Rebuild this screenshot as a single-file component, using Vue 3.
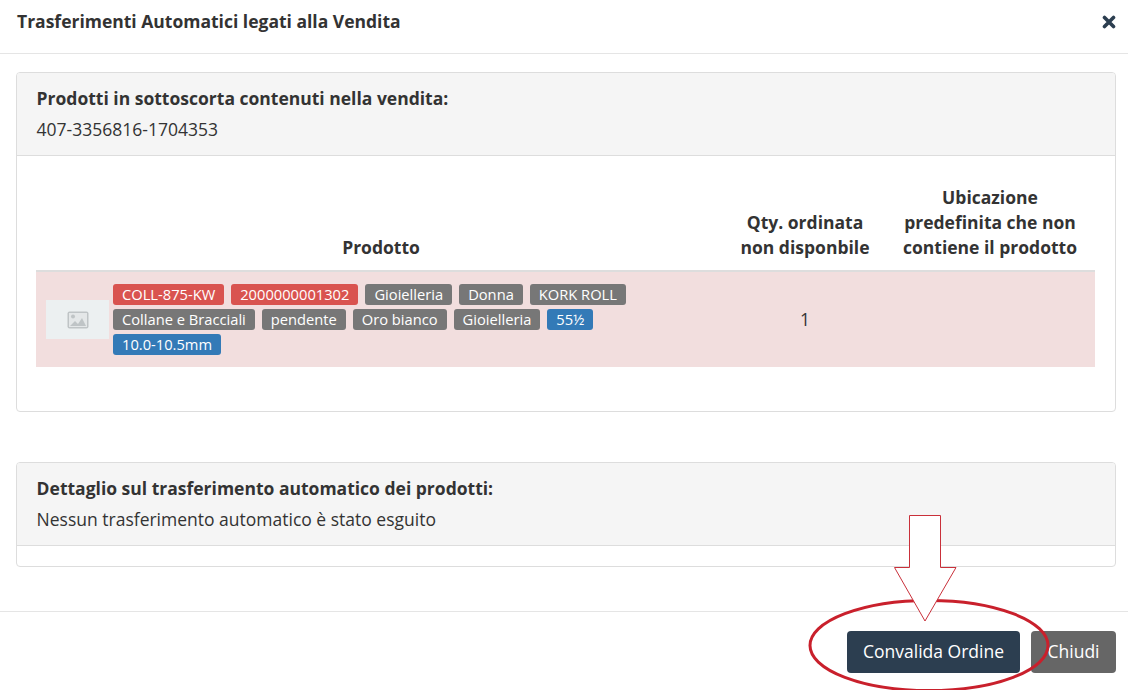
<script setup>
const labels = [
  { t: 'COLL-875-KW', c: 'red' },
  { t: '2000000001302', c: 'red' },
  { t: 'Gioielleria', c: 'grey' },
  { t: 'Donna', c: 'grey' },
  { t: 'KORK ROLL', c: 'grey' },
  { t: 'Collane e Bracciali', c: 'grey' },
  { t: 'pendente', c: 'grey' },
  { t: 'Oro bianco', c: 'grey' },
  { t: 'Gioielleria', c: 'grey' },
  { t: '55½', c: 'blue' },
  { t: '10.0-10.5mm', c: 'blue' },
]
</script>

<template>
  <div class="modal">
    <header class="mhead">
      <h1>Trasferimenti Automatici legati alla Vendita</h1>
      <svg class="close" width="14" height="14" viewBox="0 0 14 14" aria-hidden="true">
        <path d="M2.5 2.5l9 9M11.5 2.5l-9 9" stroke="#2c3e50" stroke-width="3.6" stroke-linecap="round" fill="none" />
      </svg>
    </header>

    <main class="mbody">
      <section class="panel first">
        <div class="phead">
          <strong>Prodotti in sottoscorta contenuti nella vendita:</strong>
          <div class="sub">407-3356816-1704353</div>
        </div>
        <div class="pbody">
          <div class="thead">
            <div class="c1">Prodotto</div>
            <div class="c2">Qty. ordinata non disponbile</div>
            <div class="c3">Ubicazione predefinita che non contiene il prodotto</div>
          </div>
          <div class="row">
            <div class="c1 prod">
              <div class="thumb">
                <svg width="22" height="18" viewBox="0 0 22 18" aria-hidden="true">
                  <rect x="0.5" y="0.5" width="21" height="17" rx="2" fill="#bfc4c6" />
                  <rect x="2" y="2" width="18" height="14" fill="#e4e7e8" />
                  <circle cx="6" cy="5.5" r="2" fill="#bfc4c6" />
                  <path d="M3 15l5-5 3 3 4-6 4 8z" fill="#bfc4c6" />
                </svg>
              </div>
              <div class="labels">
                <span v-for="(l, i) in labels" :key="i" class="label" :class="l.c">{{ l.t }}</span>
              </div>
            </div>
            <div class="c2 qty">1</div>
            <div class="c3"></div>
          </div>
        </div>
      </section>

      <section class="panel second">
        <div class="phead">
          <strong>Dettaglio sul trasferimento automatico dei prodotti:</strong>
          <div class="sub">Nessun trasferimento automatico è stato esguito</div>
        </div>
        <div class="pfoot"></div>
      </section>
    </main>

    <footer class="mfoot">
      <button class="btn dark">Convalida Ordine</button>
      <button class="btn grey">Chiudi</button>
    </footer>

    <svg class="mark" width="1140" height="690" viewBox="0 0 1140 690" aria-hidden="true">
      <ellipse cx="929" cy="645.5" rx="119" ry="45" fill="none" stroke="#c9202c" stroke-width="3" />
      <path d="M909.5 515.5H940.5V567.5H956L925 621L894.5 567.5H909.5Z" fill="#fff" stroke="#c9303a" stroke-width="1" />
    </svg>
  </div>
</template>

<style>
html, body { margin: 0; background: #fff; }
</style>

<style scoped>
.modal {
  position: relative;
  width: 1140px;
  height: 690px;
  overflow: hidden;
  font-family: "Open Sans", sans-serif;
  font-size: 17.5px;
  color: #333;
  background: #fff;
}
.mhead {
  box-sizing: border-box;
  width: 1128px;
  height: 54px;
  border-bottom: 1px solid #e5e5e5;
  display: flex;
  align-items: flex-start;
  justify-content: space-between;
  padding: 9px 12px 0 17px;
}
.mhead h1 {
  margin: 0;
  font-size: 17.5px;
  line-height: 24px;
  font-weight: 700;
  color: #333;
}
.close { margin-top: 6px; }
.mbody {
  box-sizing: border-box;
  width: 1132px;
  height: 557px;
  padding: 18px 16px 0;
}
.panel {
  box-sizing: border-box;
  border: 1px solid #ddd;
  border-radius: 4px;
  overflow: hidden;
}
.first { height: 340px; }
.second { height: 105px; margin-top: 50px; }
.phead {
  background: #f5f5f5;
  border-bottom: 1px solid #ddd;
  padding: 12px 20px 0 19.6px;
  height: 70px;
  line-height: 24px;
}
.phead strong { font-weight: 700; display: block; line-height: 26px; }
.sub { margin-top: 6px; line-height: 24px; }
.pbody { padding: 29px 20px 0 19px; }
.thead {
  display: flex;
  align-items: flex-end;
  height: 87px;
  box-sizing: border-box;
  border-bottom: 2px solid #ddd;
  font-weight: 700;
  text-align: center;
  line-height: 25px;
}
.thead > div { padding-bottom: 10px; }
.thead .c1 { padding-right: 4px; box-sizing: border-box; }
.c1 { width: 694px; flex: none; }
.c2 { width: 150px; flex: none; text-align: center; box-sizing: border-box; padding: 0 5px; }
.c3 { width: 215px; flex: none; text-align: center; box-sizing: border-box; padding: 0 15px 0 20px; }
.row {
  display: flex;
  align-items: center;
  height: 95px;
  background: #f2dede;
}
.prod { display: flex; align-items: center; padding-left: 10px; box-sizing: border-box; }
.thumb {
  width: 63px;
  height: 39px;
  flex: none;
  background: #ecf0f1;
  display: flex;
  align-items: center;
  justify-content: center;
  margin-right: 4px;
}
.labels {
  display: flex;
  flex-wrap: wrap;
  gap: 4px 7px;
  width: 530px;
}
.label {
  box-sizing: border-box;
  height: 21px;
  line-height: 21px;
  padding: 0 9px;
  border-radius: 3px;
  color: #fff;
  font-size: 14.7px;
  white-space: nowrap;
}
.label.red { background: #d9534f; }
.label.grey { background: #777; }
.label.blue { background: #337ab7; }
.qty { padding-bottom: 2px; }
.mfoot {
  box-sizing: border-box;
  width: 1128px;
  height: 79px;
  border-top: 1px solid #e5e5e5;
  display: flex;
  justify-content: flex-end;
  gap: 11px;
  padding: 19px 12px 0 0;
}
.btn {
  height: 42px;
  border: none;
  border-radius: 4px;
  color: #fff;
  font-family: inherit;
  font-size: 17.5px;
  padding: 0 0 2px;
}
.btn.dark { width: 173px; background: #2c3e50; }
.btn.grey { width: 85px; background: #666; }
.mark { position: absolute; left: 0; top: 0; pointer-events: none; }
</style>
